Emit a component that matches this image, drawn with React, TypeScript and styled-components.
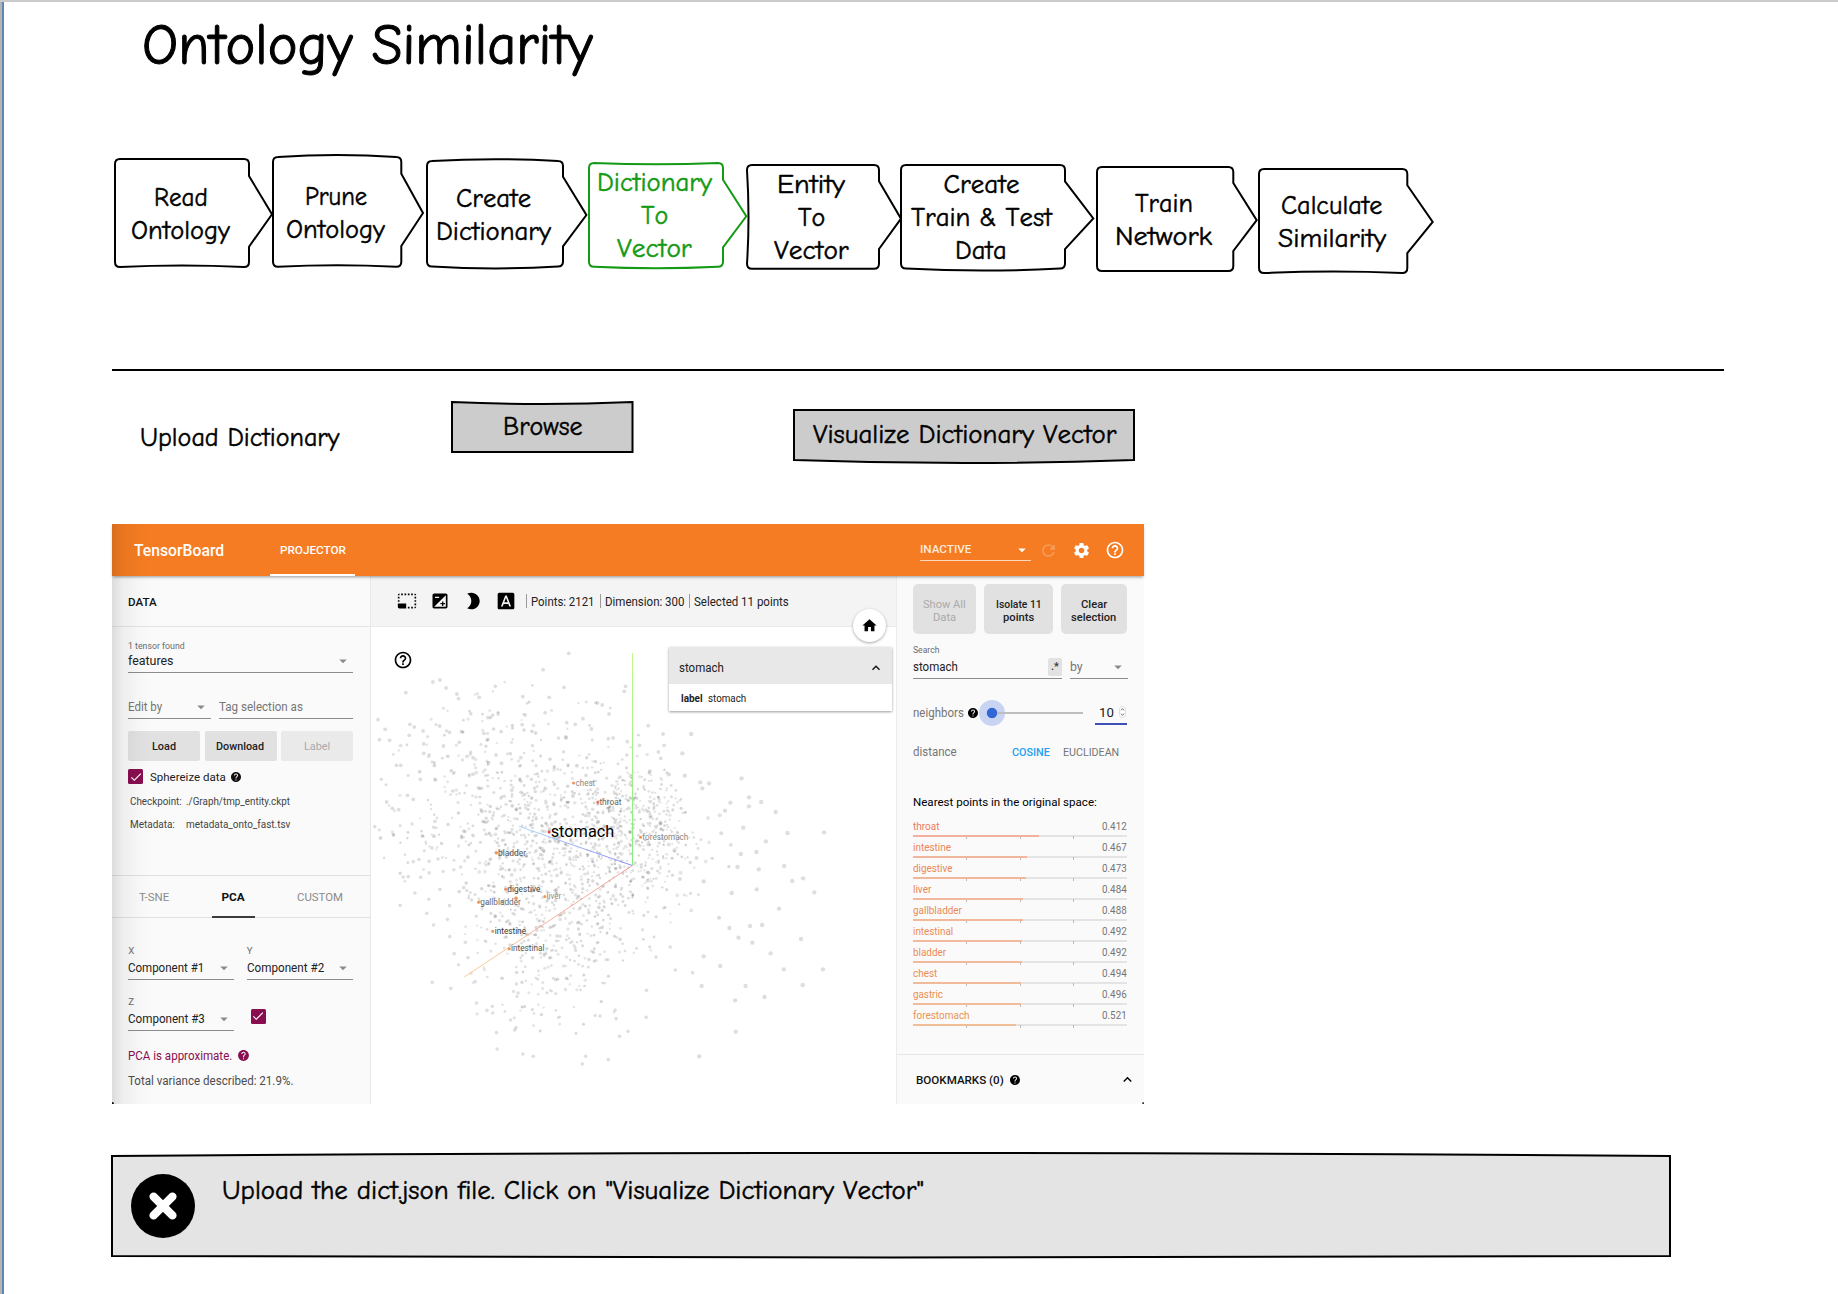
import React, { useLayoutEffect, useRef, useState } from "react";
import styled, { createGlobalStyle } from "styled-components";
import {
  MdArrowDropDown,
  MdBrightness2,
  MdCheck,
  MdExpandLess,
  MdExposure,
  MdFontDownload,
  MdHelp,
  MdHelpOutline,
  MdHome,
  MdPhotoSizeSelectSmall,
  MdRefresh,
  MdSettings,
} from "react-icons/md";

const Global = createGlobalStyle`
  * { box-sizing: border-box; }
  body { margin: 0; background: #fff; }
  svg { display: block; flex: none; }
`;

const hand = `"Comic Neue", "Comic Sans MS", Inter, "Open Sans", sans-serif`;
const ui = `Roboto, "Liberation Sans", sans-serif`;

/* ---------- text that keeps a given measure ---------- */

interface TextLook {
  $size: number;
  $line: number;
  $weight: number;
  $color: string;
  $hand: boolean;
}

const TextBox = styled.span<TextLook>`
  display: block;
  flex: none;
  height: ${(p) => p.$line}px;
  line-height: ${(p) => p.$line}px;
  font-family: ${(p) => (p.$hand ? hand : ui)};
  font-feature-settings: ${(p) => (p.$hand ? `"cv11", "ss03"` : "normal")};
  font-kerning: ${(p) => (p.$hand ? "none" : "auto")};
  font-variant-ligatures: ${(p) => (p.$hand ? "none" : "normal")};
  font-size: ${(p) => p.$size}px;
  font-weight: ${(p) => p.$weight};
  color: ${(p) => p.$color};
  -webkit-text-stroke: ${(p) => (p.$hand ? p.$size * 0.018 : 0)}px ${(p) => p.$color};
  white-space: nowrap;
`;

const TextRun = styled.span`
  display: inline-block;
  transform-origin: left center;
`;

interface TextProps {
  children: string;
  w?: number;
  size?: number;
  line?: number;
  weight?: number;
  color?: string;
  script?: boolean;
}

function Text({ children, w, size = 12, line = 16, weight = 400, color = "#222", script = false }: TextProps) {
  const run = useRef<HTMLSpanElement>(null);
  const [scale, setScale] = useState(1);
  useLayoutEffect(() => {
    if (w && run.current) setScale(w / run.current.offsetWidth);
  }, [w]);
  return (
    <TextBox
      $size={size}
      $line={line}
      $weight={weight}
      $color={color}
      $hand={script}
      style={w ? { width: w } : undefined}
    >
      <TextRun ref={run} style={w ? { transform: `scaleX(${scale})` } : undefined}>
        {children}
      </TextRun>
    </TextBox>
  );
}

/* ---------- page ---------- */

const Page = styled.div`
  width: 1838px;
  height: 1294px;
  display: flex;
  flex-direction: column;
  align-items: flex-start;
  overflow: hidden;
  background: linear-gradient(90deg, #b4b4b4 2px, #5f86b4 2px, #5f86b4 4px, #fff 4px);
  border-top: 2px solid #cbcbcb;
`;

const Title = styled.div`
  margin: 14px 0 0 142px;
  height: 60px;
`;

const Steps = styled.div`
  display: flex;
  align-items: flex-start;
  height: 130px;
  margin: 74px 0 0 115px;
`;

const StepBox = styled.div<{ $gap: number; $top: number; $w: number; $h: number }>`
  display: grid;
  flex: none;
  margin: ${(p) => p.$top}px 0 0 ${(p) => p.$gap}px;
  width: ${(p) => p.$w}px;
  height: ${(p) => p.$h}px;
  > * {
    grid-area: 1 / 1;
  }
`;

const StepShape = styled.svg`
  overflow: visible;
`;

const StepLines = styled.div<{ $w: number }>`
  width: ${(p) => p.$w - 3}px;
  height: 100%;
  padding-top: 2px;
  display: flex;
  flex-direction: column;
  align-items: center;
  justify-content: center;
`;

interface StepData {
  x: number;
  right: number;
  tip: number;
  top: number;
  bottom: number;
  notch: [number, number];
  tipY: number;
  bow?: [number, number, number];
  lines: [string, number][];
  active?: boolean;
}

const steps: StepData[] = [
  { x: 115, right: 249, tip: 272, top: 159, bottom: 267, notch: [176, 246.7], tipY: 214.3, bow: [0, -3, 0], lines: [["Read", 54], ["Ontology", 99]] },
  { x: 273, right: 401.3, tip: 423, top: 157.3, bottom: 267, notch: [174, 246.3], tipY: 213.3, bow: [-4, -3, 0], lines: [["Prune", 62], ["Ontology", 99]] },
  { x: 427, right: 563, tip: 586.4, top: 161.3, bottom: 266.7, notch: [177, 246.7], tipY: 215.3, bow: [-3.5, 4, 0], lines: [["Create", 75], ["Dictionary", 115]] },
  { x: 589, right: 723, tip: 746.3, top: 163, bottom: 266.8, notch: [179.7, 247.3], tipY: 216.3, bow: [2.5, 3, 0], active: true, lines: [["Dictionary", 115], ["To", 27], ["Vector", 75]] },
  { x: 747, right: 879, tip: 901, top: 165, bottom: 268.8, notch: [181.3, 249], tipY: 218.7, bow: [0, 0, 3], lines: [["Entity", 68], ["To", 27], ["Vector", 75]] },
  { x: 901, right: 1065, tip: 1093.3, top: 164.9, bottom: 268.5, notch: [181.3, 249], tipY: 218.4, bow: [0, 4, 0], lines: [["Create", 76], ["Train & Test", 141], ["Data", 52]] },
  { x: 1097, right: 1233.3, tip: 1256.7, top: 167, bottom: 271, notch: [183, 251], tipY: 220.2, bow: [0, 0, 0], lines: [["Train", 58], ["Network", 97]] },
  { x: 1259, right: 1407.3, tip: 1432.7, top: 169, bottom: 273, notch: [185.3, 253], tipY: 222, bow: [0, -3, 0], lines: [["Calculate", 101], ["Similarity", 108]] },
];

function Step({ s, prev }: { s: StepData; prev: number }) {
  const w = s.right - s.x;
  const h = s.bottom - s.top;
  const [bt, bb, bl] = s.bow ?? [0, 0, 0];
  const r = 5;
  const d = [
    `M${r} 0`,
    `Q${w / 2} ${bt} ${w - r} 0`,
    `Q${w} 0 ${w} ${r}`,
    `V${s.notch[0] - s.top}`,
    `L${s.tip - s.x} ${s.tipY - s.top}`,
    `L${w} ${s.notch[1] - s.top}`,
    `V${h - r}`,
    `Q${w} ${h} ${w - r} ${h}`,
    `Q${w / 2} ${h + bb} ${r} ${h}`,
    `Q0 ${h} 0 ${h - r}`,
    `Q${bl} ${h / 2} 0 ${r}`,
    `Q0 0 ${r} 0Z`,
  ].join(" ");
  const color = s.active ? "#149a14" : "#000";
  return (
    <StepBox $gap={s.x - prev} $top={s.top - 150} $w={s.tip - s.x} $h={h}>
      <StepShape width={s.tip - s.x} height={h}>
        <path d={d} fill="#fff" stroke={color} strokeWidth={2} />
      </StepShape>
      <StepLines $w={w}>
        {s.lines.map(([t, tw]) => (
          <Text key={t} script size={27} line={33.2} w={tw} color={color}>
            {t}
          </Text>
        ))}
      </StepLines>
    </StepBox>
  );
}

const Divider = styled.div`
  margin: 89px 0 0 112px;
  width: 1612px;
  height: 2px;
  background: #000;
`;

const Actions = styled.div`
  display: flex;
  align-items: flex-start;
  height: 153px;
  margin-left: 140px;
`;

const UploadLabel = styled.div`
  width: 311.5px;
  padding-top: 50px;
`;

const SketchButton = styled.div<{ $w: number; $top: number; $gap: number }>`
  display: grid;
  width: ${(p) => p.$w}px;
  height: 50px;
  margin: ${(p) => p.$top}px 0 0 ${(p) => p.$gap}px;
  > * {
    grid-area: 1 / 1;
  }
  > span {
    place-self: center;
    padding-left: 1px;
  }
`;

function Sketched({ w, h, top, bottom, fill }: { w: number; h: number; top: number; bottom: number; fill: string }) {
  return (
    <StepShape width={w} height={h}>
      <path
        d={`M0 0 Q${w / 2} ${top} ${w} 0 V${h} Q${w / 2} ${h + bottom} 0 ${h} Z`}
        fill={fill}
        stroke="#000"
        strokeWidth={2}
      />
    </StepShape>
  );
}

/* ---------- projector ---------- */

const Board = styled.div`
  margin-left: 112px;
  width: 1032px;
  height: 580px;
  flex: none;
  display: flex;
  flex-direction: column;
  position: relative;
  background: #fff;
  &::after {
    content: "";
    position: absolute;
    inset: 0;
    z-index: 2;
    pointer-events: none;
    background:
      radial-gradient(circle at 0 100%, #111 1.5px, transparent 2.5px),
      radial-gradient(circle at 100% 100%, #444 1.5px, transparent 2.5px),
      linear-gradient(90deg, rgba(0, 0, 0, 0.12), rgba(0, 0, 0, 0.05) 10px, rgba(0, 0, 0, 0.015) 26px, transparent 40px);
  }
`;

const TopBar = styled.div`
  height: 52px;
  flex: none;
  display: flex;
  align-items: center;
  padding: 1px 0 0 21.5px;
  background: #f57c22;
  position: relative;
  z-index: 1;
  box-shadow: 0 2px 3px -1px rgba(0, 0, 0, 0.4);
`;

const TopTab = styled.div`
  width: 85px;
  height: 51px;
  margin-left: 45.5px;
  margin-right: 565.5px;
  padding: 1px 0 0 1px;
  display: flex;
  align-items: center;
  justify-content: center;
  border-bottom: 2px solid #fff;
`;

const Inactive = styled.div`
  width: 111px;
  height: 24px;
  margin-top: -4px;
  padding-top: 3px;
  display: flex;
  align-items: center;
  justify-content: space-between;
  border-bottom: 1px solid rgba(255, 255, 255, 0.7);
  color: #fff;
`;

const TopIcons = styled.div`
  display: flex;
  align-items: center;
  gap: 14px;
  margin: -1px 0 0 7.5px;
  color: #fff;
  > :first-child {
    opacity: 0.25;
  }
`;

const Columns = styled.div`
  flex: 1;
  display: grid;
  grid-template-columns: 259px 525px 248px;
`;

const LeftPanel = styled.div`
  background: #fafafa;
  border-right: 1px solid #e8e8e8;
  display: flex;
  flex-direction: column;
`;

const PanelTitle = styled.div`
  height: 51px;
  display: flex;
  align-items: center;
  padding: 1px 0 0 16.2px;
  border-bottom: 1px solid #e5e5e5;
`;

const PanelBody = styled.div<{ $h: number }>`
  height: ${(p) => p.$h}px;
  padding: 0 17px 0 16.3px;
`;

const Row = styled.div<{ $top?: number; $gap?: number; $h?: number; $between?: boolean; $left?: number }>`
  display: flex;
  align-items: center;
  margin-top: ${(p) => p.$top ?? 0}px;
  padding-left: ${(p) => p.$left ?? 0}px;
  gap: ${(p) => p.$gap ?? 0}px;
  height: ${(p) => (p.$h ? p.$h + "px" : "auto")};
  justify-content: ${(p) => (p.$between ? "space-between" : "flex-start")};
`;

const Field = styled.div<{ $w?: number }>`
  width: ${(p) => (p.$w ? p.$w + "px" : "auto")};
  flex: none;
  height: 20px;
  padding-bottom: 2.5px;
  display: flex;
  align-items: center;
  justify-content: space-between;
  border-bottom: 1px solid #8c8c8c;
  > svg {
    color: #8a8a8a;
    margin-right: 1px;
  }
`;

const Arrow = () => <MdArrowDropDown size={18} />;

const FlatButton = styled.div<{ $off?: boolean }>`
  width: 72px;
  height: 30px;
  padding-top: 1.5px;
  border-radius: 2px;
  background: ${(p) => (p.$off ? "#eaeaea" : "#e1e1e1")};
  display: flex;
  align-items: center;
  justify-content: center;
`;

const Tick = styled.div<{ $left?: number; $lift?: number }>`
  width: 15px;
  height: 15px;
  margin-left: ${(p) => p.$left ?? 0}px;
  margin-bottom: ${(p) => p.$lift ?? 0}px;
  border-radius: 1.5px;
  background: #880e4f;
  color: #fff;
  display: flex;
  align-items: center;
  justify-content: center;
`;

const Tabs = styled.div`
  height: 43px;
  display: grid;
  grid-template-columns: 84px 74px 100px;
  border-top: 1px solid #e0e0e0;
  border-bottom: 1px solid #e0e0e0;
`;

const Tab = styled.div<{ $on?: boolean }>`
  display: flex;
  align-items: center;
  justify-content: center;
  padding-top: 1px;
  width: ${(p) => (p.$on ? "43px" : "auto")};
  margin: ${(p) => (p.$on ? "0 auto -1px" : "0")};
  border-bottom: ${(p) => (p.$on ? "2px solid #3c3c3c" : "none")};
`;

const Center = styled.div`
  display: flex;
  flex-direction: column;
  position: relative;
`;

const Toolbar = styled.div`
  height: 51px;
  background: #f4f4f4;
  border-bottom: 1px solid #ebebeb;
  display: flex;
  align-items: center;
  padding-left: 25.5px;
  color: #000;
`;

const ToolIcons = styled.div`
  display: flex;
  gap: 13px;
  margin-right: 10.5px;
`;

const Stat = styled.div`
  display: flex;
  align-items: center;
  height: 14px;
  padding: 1px 0 0 4px;
  margin-right: 5px;
  border-left: 1px solid #9a9a9a;
`;

const HomeButton = styled.div`
  position: absolute;
  left: 481.5px;
  top: 33px;
  width: 33px;
  height: 33px;
  border-radius: 50%;
  background: #fff;
  box-shadow: 0 1px 3px rgba(0, 0, 0, 0.35);
  display: flex;
  align-items: center;
  justify-content: center;
`;

const HelpMark = styled.div`
  position: absolute;
  left: 22.3px;
  top: 73.5px;
`;

const Inspector = styled.div`
  position: absolute;
  left: 297.6px;
  top: 71px;
  width: 223px;
  background: #fff;
  box-shadow: 0 1px 2.5px rgba(0, 0, 0, 0.4);
`;

const InspectorHead = styled.div`
  height: 36.5px;
  padding: 4.5px 8px 0 10px;
  display: flex;
  align-items: center;
  justify-content: space-between;
  background: #e8e8e8;
`;

const InspectorRow = styled.div`
  height: 27px;
  padding: 4px 0 0 12.5px;
  display: flex;
  align-items: center;
  gap: 5px;
`;

const Plot = styled.svg`
  font-family: ${ui};
`;

const RightPanel = styled.div`
  background: #fafafa;
  border-left: 1px solid #ececec;
  padding: 0 17px 0 16px;
  display: flex;
  flex-direction: column;
`;

const BigButton = styled.div<{ $w: number }>`
  width: ${(p) => p.$w}px;
  height: 50px;
  border-radius: 5px;
  background: #e1e1e1;
  display: flex;
  flex-direction: column;
  align-items: center;
  justify-content: center;
  padding-top: 3px;
`;

const Regex = styled.div`
  width: 14px;
  height: 18px;
  border-radius: 2px;
  background: #e2e2e2;
  display: flex;
  align-items: center;
  justify-content: center;
`;

const Slider = styled.div`
  width: 104px;
  height: 26px;
  display: flex;
  align-items: center;
`;

const Knob = styled.div`
  width: 26px;
  height: 26px;
  flex: none;
  border-radius: 50%;
  background: radial-gradient(circle, #3367d6 4.8px, #c8d4f1 5.6px);
`;

const Track = styled.div`
  height: 2px;
  flex: 1;
  margin-left: -8px;
  background: #bdbdbd;
`;

const NumberBox = styled.div`
  width: 32px;
  height: 23px;
  margin-left: auto;
  padding: 0 1px 0 4px;
  display: flex;
  align-items: center;
  justify-content: space-between;
  border-bottom: 2px solid #3c50b8;
`;

const Neighbours = styled.div`
  margin-top: 9px;
`;

const Neighbour = styled.div`
  height: 21.07px;
`;

const Bar = styled.div`
  height: 4px;
  background-image: linear-gradient(#bbb, #bbb), linear-gradient(#bbb, #bbb), linear-gradient(#bbb, #bbb),
    linear-gradient(#e4e4e4, #e4e4e4);
  background-repeat: no-repeat;
  background-size: 1px 3px, 1px 3px, 1px 3px, 100% 2px;
  background-position: 25% 1px, 50% 1px, 75% 1px, 0 0;
`;

const Fill = styled.div<{ $c: string }>`
  height: 2px;
  background: color-mix(in srgb, ${(p) => p.$c} 58%, #fafafa);
`;

const Bookmarks = styled.div`
  height: 50.5px;
  margin: auto -17px 0 -16px;
  padding: 1px 8px 0 19px;
  display: flex;
  align-items: center;
  border-top: 1.5px solid #e6e6e6;
  > :last-child {
    margin-left: auto;
  }
  > svg:not(:last-child) {
    margin-left: 5px;
  }
`;

/* ---------- point cloud, in the plot's own coordinates ---------- */

const OX = 371;
const OY = 626;

const farUpper: number[][] = [
  [588,415],[512,464],[186,501],[207,495],[225,519],[106,533],[257,537],[262,551],[323,547],[574,517],[756,514],[752,529],[452,545],[530,547],
  [673,564],[687,570],[707,597],[24,614],[45,643],[118,628],[131,636],[28,674],[58,676],[116,661],[157,648],[206,633],[235,652],[270,650],[298,596],
  [349,608],[379,597],[459,600],[518,593],[823,632],[867,657],[950,657],[924,715],[870,691],[860,730],[853,711],[797,691],[1099,790],[1066,863],[1121,847],
  [1157,861],[1200,891],[1121,874],[977,802],[1003,805],[983,820],[931,782],[884,778],[78,751],[91,751],[49,861],[149,793],[1050,887],
  [159,687],[159,715],[174,723],[217,693],[264,682],[337,655],[349,673],[388,650],[450,629],[490,654],[66,880],[85,884],[111,841],[128,853],
  [630,611],[655,642],[580,669],[582,623],[607,628],[705,671],[719,669],[761,680],[415,716],[446,728],[373,720],[351,744],[287,724],[305,728],
];

const farLower: number[][] = [
  [1343,97],[1235,99],[1171,124],[1225,198],[1150,208],[1143,156],[1249,243],[1281,235],[1314,277],[1210,326],[1160,375],[1124,378],[1275,417],
  [1131,428],[1185,460],[1224,508],[1340,508],[1280,555],[1167,591],[1111,558],[1080,601],[981,558],[1082,695],[974,769],[987,244],[1087,201],
  [1104,83],[1097,162],[1144,268],[1070,279],[1063,384],[1090,413],[846,471],[903,510],[954,518],[987,469],[1036,498],[888,441],[817,652],
  [818,571],[728,656],[763,694],[738,709],[705,779],[628,792],[638,769],[376,747],[374,698],[416,660],[452,762],[483,769],[184,547],[239,565],
  [315,609],[346,631],[363,639],[89,316],[133,279],[249,461],[236,410],[188,375],[168,340],[229,358],[98,231],[113,230],[14,80],[290,473],
  [282,427],[150,232],[175,184],[268,201],[154,108],[128,185],[207,268],[235,317],[311,545],[432,683],[428,690],[433,552],[438,579],
];

function makeCloud() {
  let seed = 20117;
  const rnd = () => {
    seed = (seed * 1664525 + 1013904223) % 4294967296;
    return seed / 4294967296;
  };
  const gauss = () => Math.sqrt(-2 * Math.log(rnd() + 1e-9)) * Math.cos(2 * Math.PI * rnd());
  const pts: { x: number; y: number; r: number; o: number }[] = [];
  const blob = (n: number, cx: number, cy: number, sx: number, sy: number, r0: number, r1: number) => {
    let k = 0;
    while (k < n) {
      const gx = gauss();
      const gy = gauss();
      if (gx * gx + gy * gy > 4.6) continue;
      const x = cx + gx * sx;
      const y = cy + gy * sy;
      k++;
      if (x < 374) continue;
      pts.push({ x, y, r: r0 + rnd() * (r1 - r0), o: 0.09 + rnd() * 0.07 });
    }
  };
  blob(360, 628, 825, 34, 34, 0.9, 1.5);
  blob(580, 522, 815, 68, 64, 1.1, 1.9);
  blob(420, 580, 865, 58, 50, 1, 1.7);
  blob(230, 545, 950, 45, 48, 1.1, 1.8);
  blob(40, 680, 845, 32, 42, 1.4, 2.1);
  for (const [a, b] of farUpper) pts.push({ x: 370 + a / 2.958, y: 515 + b / 3, r: a > 880 ? 2.2 : 1.9, o: 0.13 });
  for (const [a, b] of farLower) pts.push({ x: 370 + a / 2.958, y: 800 + b / 3, r: a > 960 ? 2.2 : 1.8, o: 0.13 });
  return pts;
}

const cloud = makeCloud();

interface Tagged {
  t: string;
  dx: number;
  dy: number;
  x: number;
  y: number;
  w: number;
  c: string;
  dot?: string;
  size?: number;
}

const tagged: Tagged[] = [
  { t: "chest", dx: 573.5, dy: 783, x: 575.5, y: 785.7, w: 19.7, c: "#888" },
  { t: "throat", dx: 597.9, dy: 802, x: 599.4, y: 804.7, w: 22, c: "#666", dot: "#f0714f" },
  { t: "forestomach", dx: 640.5, dy: 837.3, x: 642.3, y: 839.8, w: 46, c: "#888" },
  { t: "bladder", dx: 496.4, dy: 853, x: 498, y: 855.8, w: 28, c: "#555" },
  { t: "digestive", dx: 505.6, dy: 889.3, x: 507.3, y: 892.2, w: 33, c: "#444" },
  { t: "liver", dx: 544.8, dy: 896.5, x: 546.6, y: 899.2, w: 14.5, c: "#888" },
  { t: "gallbladder", dx: 478.5, dy: 902.3, x: 480.3, y: 904.8, w: 40.5, c: "#666" },
  { t: "intestine", dx: 492.7, dy: 931.3, x: 494.7, y: 934.2, w: 31.3, c: "#333" },
  { t: "intestinal", dx: 509.3, dy: 948.7, x: 510.9, y: 951.4, w: 33.7, c: "#555" },
  { t: "stomach", dx: 549.2, dy: 832, x: 550.7, y: 837, w: 63.6, c: "#000", dot: "#e0504a", size: 17 },
];

function Cloud() {
  return (
    <Plot width={525} height={477} viewBox={`${OX} ${OY + 1} 525 477`}>
      <defs>
        <linearGradient id="axis-z" gradientUnits="userSpaceOnUse" x1="632.3" y1="865" x2="518.8" y2="826">
          <stop offset="0" stopColor="#7f7ff5" />
          <stop offset="1" stopColor="#9cd3fb" />
        </linearGradient>
        <linearGradient id="axis-x" gradientUnits="userSpaceOnUse" x1="632.3" y1="865" x2="464.3" y2="976.7">
          <stop offset="0" stopColor="#f58b8b" />
          <stop offset="1" stopColor="#fbc98c" />
        </linearGradient>
        <linearGradient id="axis-y" gradientUnits="userSpaceOnUse" x1="632" y1="865" x2="632" y2="653">
          <stop offset="0" stopColor="#7fee7f" />
          <stop offset="1" stopColor="#c4f78c" />
        </linearGradient>
      </defs>
      {cloud.map((p, i) => (
        <circle key={i} cx={p.x} cy={p.y} r={p.r} fill="#000" opacity={p.o} />
      ))}
      <rect x={632} y={653} width={1} height={212} fill="url(#axis-y)" />
      <path d="M632.3 865.5 L518.8 826.3" stroke="url(#axis-z)" strokeWidth={0.9} />
      <path d="M632.3 865.5 L464.3 977" stroke="url(#axis-x)" strokeWidth={0.9} />
      <circle cx={516} cy={898.3} r={1.8} fill="#f0935a" />
      {tagged.map((p) => (
        <g key={p.t}>
          <circle cx={p.dx} cy={p.dy} r={1.5} fill={p.dot ?? "#f0935a"} />
          <text x={p.x} y={p.y} fontSize={p.size ?? 8.6} fill={p.c} textLength={p.w} lengthAdjust="spacingAndGlyphs">
            {p.t}
          </text>
        </g>
      ))}
    </Plot>
  );
}

const nearest: [string, number, string, number][] = [
  ["throat", 0.412, "#ee7b5e", 26.3],
  ["intestine", 0.467, "#ec8558", 38],
  ["digestive", 0.473, "#ec8657", 39.5],
  ["liver", 0.484, "#eb8955", 18.2],
  ["gallbladder", 0.488, "#eb8a55", 48.7],
  ["intestinal", 0.492, "#eb8b54", 40.3],
  ["bladder", 0.492, "#eb8b54", 33.2],
  ["chest", 0.494, "#ea8c53", 24.3],
  ["gastric", 0.496, "#ea8d53", 30.3],
  ["forestomach", 0.521, "#e9934f", 56.2],
];

/* ---------- notice ---------- */

const Notice = styled.div`
  display: grid;
  width: 1558px;
  height: 100px;
  margin: 52px 0 0 112px;
  > * {
    grid-area: 1 / 1;
  }
`;

const NoticeBody = styled.div`
  display: flex;
  padding: 17.5px 0 0 19px;
  gap: 27px;
`;

function ErrorMark() {
  return (
    <svg width={64} height={64} viewBox="0 0 64 64">
      <circle cx={32} cy={32} r={32} fill="#000" />
      <path d="M22.6 22.6 L41.4 41.4 M41.4 22.6 L22.6 41.4" stroke="#fff" strokeWidth={8.4} strokeLinecap="round" />
    </svg>
  );
}

const Component = ({ n, w }: { n: string; w: number }) => (
  <Field $w={106}>
    <Text w={w}>{`Component #${n}`}</Text>
    <Arrow />
  </Field>
);

export default function App() {
  return (
    <Page>
      <Global />
      <Title>
        <Text script size={58} line={60} w={451} color="#000">Ontology Similarity</Text>
      </Title>

      <Steps>
        {steps.map((s, i) => (
          <Step key={i} s={s} prev={i ? steps[i - 1].tip : 115} />
        ))}
      </Steps>

      <Divider />

      <Actions>
        <UploadLabel>
          <Text script size={27} line={34} w={199} color="#000">Upload Dictionary</Text>
        </UploadLabel>
        <SketchButton $w={180.5} $top={31} $gap={0}>
          <Sketched w={180.5} h={50} top={4} bottom={0} fill="#ccc" />
          <Text script size={27} line={34} w={80} color="#000">Browse</Text>
        </SketchButton>
        <SketchButton $w={340} $top={39} $gap={162}>
          <Sketched w={340} h={50} top={0} bottom={6} fill="#ccc" />
          <Text script size={27} line={34} w={304} color="#000">Visualize Dictionary Vector</Text>
        </SketchButton>
      </Actions>

      <Board>
        <TopBar>
          <Text size={16.5} line={20} weight={500} w={90.5} color="#fff">TensorBoard</Text>
          <TopTab>
            <Text size={11.8} weight={500} w={65.5} color="#fff">PROJECTOR</Text>
          </TopTab>
          <Inactive>
            <Text size={11} weight={500} w={51} color="#ffeadb">INACTIVE</Text>
            <MdArrowDropDown size={18} />
          </Inactive>
          <TopIcons>
            <MdRefresh size={19} />
            <MdSettings size={19} />
            <MdHelpOutline size={20} />
          </TopIcons>
        </TopBar>

        <Columns>
          <LeftPanel>
            <PanelTitle>
              <Text size={11.8} weight={500} w={28.5} color="#111">DATA</Text>
            </PanelTitle>
            <PanelBody $h={248}>
              <Row $top={11.5} $h={14.5}>
                <Text size={9.6} w={56.5} color="#6c6c6c">1 tensor found</Text>
              </Row>
              <Field>
                <Text w={45.5}>features</Text>
                <Arrow />
              </Field>
              <Row $top={26} $gap={8.5}>
                <Field $w={82.3}>
                  <Text w={34.5} color="#757575">Edit by</Text>
                  <Arrow />
                </Field>
                <Field $w={134}>
                  <Text w={84} color="#757575">Tag selection as</Text>
                </Field>
              </Row>
              <Row $top={12} $between>
                <FlatButton>
                  <Text size={11.2} weight={500} w={24.3}>Load</Text>
                </FlatButton>
                <FlatButton>
                  <Text size={11.2} weight={500} w={48.3}>Download</Text>
                </FlatButton>
                <FlatButton $off>
                  <Text size={11.2} w={26.2} color="#aaa">Label</Text>
                </FlatButton>
              </Row>
              <Row $top={8} $gap={6.6} $h={15}>
                <Tick><MdCheck size={14} /></Tick>
                <Text size={11.8} w={76}>Sphereize data</Text>
                <MdHelp size={12} color="#111" style={{ marginLeft: -2 }} />
              </Row>
              <Row $top={9.5} $left={2.2} $gap={4}>
                <Text size={10.3} w={51.5} color="#444">Checkpoint:</Text>
                <Text size={10.3} w={104.3} color="#444">./Graph/tmp_entity.ckpt</Text>
              </Row>
              <Row $top={7} $left={2.2} $gap={11}>
                <Text size={10.3} w={44.5} color="#444">Metadata:</Text>
                <Text size={10.3} w={104.3} color="#444">metadata_onto_fast.tsv</Text>
              </Row>
            </PanelBody>
            <Tabs>
              <Tab><Text size={11.8} w={30.2} color="#8a8a8a">T-SNE</Text></Tab>
              <Tab $on><Text size={11.8} weight={700} w={23} color="#111">PCA</Text></Tab>
              <Tab><Text size={11.8} w={46.3} color="#8a8a8a">CUSTOM</Text></Tab>
            </Tabs>
            <PanelBody $h={186}>
              <Row $top={24} $h={18} $gap={112.5}>
                <Text size={9.6} color="#6c6c6c">X</Text>
                <Text size={9.6} color="#6c6c6c">Y</Text>
              </Row>
              <Row $gap={12.3}>
                <Component n="1" w={75.8} />
                <Component n="2" w={76.8} />
              </Row>
              <Row $top={13} $h={18}>
                <Text size={9.6} color="#6c6c6c">Z</Text>
              </Row>
              <Row $h={20}>
                <Component n="3" w={76.5} />
                <Tick $left={16.5} $lift={10}><MdCheck size={14} /></Tick>
              </Row>
              <Row $top={16.5} $gap={4.5}>
                <Text w={104} color="#880e4f">PCA is approximate.</Text>
                <MdHelp size={13} color="#880e4f" />
              </Row>
              <Row $top={9.6}>
                <Text w={165} color="#4c4c4c">Total variance described: 21.9%.</Text>
              </Row>
            </PanelBody>
          </LeftPanel>

          <Center>
            <Toolbar>
              <ToolIcons>
                <MdPhotoSizeSelectSmall size={20} />
                <MdExposure size={20} />
                <MdBrightness2 size={20} />
                <MdFontDownload size={20} />
              </ToolIcons>
              <Stat><Text size={12} w={63.6}>Points: 2121</Text></Stat>
              <Stat><Text size={12} w={79.5}>Dimension: 300</Text></Stat>
              <Stat><Text size={12} w={95}>Selected 11 points</Text></Stat>
            </Toolbar>
            <Cloud />
            <HomeButton><MdHome size={17} color="#000" /></HomeButton>
            <HelpMark><MdHelpOutline size={20} color="#000" /></HelpMark>
            <Inspector>
              <InspectorHead>
                <Text w={45}>stomach</Text>
                <MdExpandLess size={16} color="#111" />
              </InspectorHead>
              <InspectorRow>
                <Text size={10.2} weight={700} w={21.5}>label</Text>
                <Text size={10.2} w={38.5}>stomach</Text>
              </InspectorRow>
            </Inspector>
          </Center>

          <RightPanel>
            <Row $top={8} $between>
              <BigButton $w={63}>
                <Text size={11.2} line={13} weight={400} w={42.6} color="#aaa">Show All</Text>
                <Text size={11.2} line={13} weight={400} w={23} color="#aaa">Data</Text>
              </BigButton>
              <BigButton $w={69}>
                <Text size={11.2} line={13} weight={500} w={45.4}>Isolate 11</Text>
                <Text size={11.2} line={13} weight={500} w={31}>points</Text>
              </BigButton>
              <BigButton $w={66}>
                <Text size={11.2} line={13} weight={500} w={26}>Clear</Text>
                <Text size={11.2} line={13} weight={500} w={45.6}>selection</Text>
              </BigButton>
            </Row>
            <Row $top={7} $h={17}>
              <Text size={9.4} line={15} w={26.6} color="#6c6c6c">Search</Text>
            </Row>
            <Row $top={1} $gap={8.3}>
              <Field $w={149}>
                <Text w={45}>stomach</Text>
                <Regex><Text size={11} weight={500} color="#333">.*</Text></Regex>
              </Field>
              <Field $w={57.5}>
                <Text w={12.3} color="#757575">by</Text>
                <Arrow />
              </Field>
            </Row>
            <Row $top={21} $h={26}>
              <Text w={50.8} color="#757575">neighbors</Text>
              <MdHelp size={12} color="#000" style={{ marginLeft: 3.5 }} />
              <Slider>
                <Knob />
                <Track />
              </Slider>
              <NumberBox>
                <Text size={13.6} w={14.6}>10</Text>
                <svg width={7} height={12} viewBox="0 0 7 12">
                  <rect x={0.5} y={0.5} width={6} height={11} rx={3} fill="#fff" stroke="#ddd" />
                  <path d="M2 4.4 L3.5 2.6 L5 4.4 M2 7.6 L3.5 9.4 L5 7.6" fill="none" stroke="#777" />
                </svg>
              </NumberBox>
            </Row>
            <Row $top={17.5}>
              <Text w={44} color="#757575">distance</Text>
              <Row $left={55.2} $gap={12.8}>
                <Text size={11.5} weight={500} w={37.6} color="#1fa0f0">COSINE</Text>
                <Text size={11.5} w={56.6} color="#757575">EUCLIDEAN</Text>
              </Row>
            </Row>
            <Row $top={34}>
              <Text size={11.8} w={184} color="#000">Nearest points in the original space:</Text>
            </Row>
            <Neighbours>
              {nearest.map(([name, v, c, w]) => (
                <Neighbour key={name}>
                  <Row $between>
                    <Text size={11} w={w} color={c}>{name}</Text>
                    <Text size={11} w={25} color="#757575">{v.toFixed(3)}</Text>
                  </Row>
                  <Bar>
                    <Fill $c={c} style={{ width: `${(1 - v) * 100}%` }} />
                  </Bar>
                </Neighbour>
              ))}
            </Neighbours>
            <Bookmarks>
              <Text size={11.8} weight={500} w={87.5} color="#111">BOOKMARKS (0)</Text>
              <MdHelp size={12} color="#000" />
              <MdExpandLess size={17} color="#000" />
            </Bookmarks>
          </RightPanel>
        </Columns>
      </Board>

      <Notice>
        <Sketched w={1558} h={100} top={-6} bottom={3} fill="#e4e4e4" />
        <NoticeBody>
          <ErrorMark />
          <Text script size={27} line={34} w={702} color="#000">
            {'Upload the dict.json file. Click on "Visualize Dictionary Vector"'}
          </Text>
        </NoticeBody>
      </Notice>
    </Page>
  );
}
